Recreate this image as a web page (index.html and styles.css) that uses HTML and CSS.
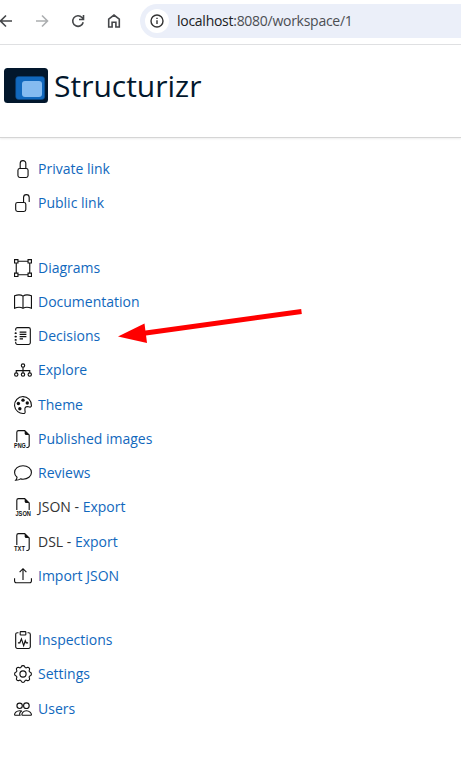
FILE: index.html
```html
<!DOCTYPE html>
<html lang="en">
<head>
<meta charset="utf-8">
<title>Structurizr</title>
<link rel="stylesheet" href="styles.css">
</head>
<body>
<div class="toolbar">
  <svg class="nav" viewBox="0 0 16 16"><path d="M14 8H2.500M8 2.500 2.500 8 8 13.500"/></svg>
  <svg class="nav off" viewBox="0 0 16 16"><path d="M2 8h11.500M8 2.500 13.500 8 8 13.500"/></svg>
  <svg class="nav" viewBox="0 0 16 16"><path d="M13.200 9.200A5.300 5.300 0 1 1 12 4.500L13.300 6M13.500 2v4.500H9"/></svg>
  <svg class="nav" viewBox="0 0 16 16"><path d="M2.700 14V6.200L8 2l5.300 4.200V14H9.900V9.200H6.100V14Z"/></svg>
  <div class="address">
    <span class="info"><svg viewBox="0 0 16 16"><circle cx="8" cy="8" r="6"/><path d="M8 7.300v3.700M8 4.700v1.400"/></svg></span>
    <span class="url"><b>localhost</b>:8080/workspace/1</span>
  </div>
</div>
<header class="brand">
  <svg class="logo" viewBox="0 0 44 35"><rect width="44" height="35" rx="3.500" fill="#02172c"/><rect x="11.700" y="8.500" width="29" height="23" rx="3" fill="#1168bd" stroke="#0b4884" stroke-width=".6"/><rect x="18" y="13" width="20" height="16" rx="3" fill="#85bbf0"/></svg>
  <span class="name">Structurizr</span>
</header>
<main>
  <ul class="menu">
    <li><svg viewBox="0 0 16 16"><path d="M5.500 7V3a2.500 2.500 0 0 1 5 0V7"/><rect x="3.500" y="7.500" width="9" height="8" rx="1.700"/></svg><a>Private link</a></li>
    <li><svg viewBox="0 0 16 16"><path d="M8.500 7.500V3a2.500 2.500 0 0 1 5 0V7"/><rect x="1.500" y="7.500" width="9" height="8" rx="1.700"/></svg><a>Public link</a></li>
  </ul>
  <ul class="menu">
    <li><svg viewBox="0 0 16 16"><path d="M.5.500h3v3h-3zM12.500.500h3v3h-3zM.5 12.500h3v3h-3zM12.500 12.500h3v3h-3zM3.500 2h9M3.500 14h9M2 3.500v9M14 3.500v9"/></svg><a>Diagrams</a></li>
    <li><svg viewBox="0 0 16 16"><path d="M8 2.800C6 1.300 3 1.500.5 2.500v11c2.500-1 5.500-1.200 7.500.2 2-1.400 5-1.200 7.500-.2v-11C13 1.500 10 1.300 8 2.800v10.900"/></svg><a>Documentation</a></li>
    <li><svg viewBox="0 0 16 16"><path d="M1.500 3V2A1.500 1.500 0 0 1 3 .5h10A1.500 1.500 0 0 1 14.500 2v12a1.500 1.500 0 0 1-1.500 1.500H3A1.500 1.500 0 0 1 1.500 14v-1M1.500 4.700v1.600M1.500 7.700v1.600M1.500 10.700v1.600M.5 5.500h2M.5 8.500h2M.5 11.500h2M5 4.500h6M5 6.500h6M5 8.500h6M5 10.500h3"/></svg><a>Decisions</a></li>
    <li><svg viewBox="0 0 16 16"><circle cx="8" cy="4" r="1.500"/><circle cx="2" cy="12" r="1.500"/><circle cx="8" cy="12" r="1.500"/><circle cx="14" cy="12" r="1.500"/><path d="M8 5.500v5M2 10.500v-2h12v2"/></svg><a>Explore</a></li>
    <li><svg viewBox="0 0 16 16"><path d="M8 .5a7.500 7.500 0 1 0 1.200 14.900c1-.2.700-1.600.5-2.600-.2-1.400-.1-2.400.7-3 1.100-.9 2.300-.2 3.500 0 1 .2 1.600-.5 1.600-1.400C15.500 4 12.200.5 8 .5Z"/><g class="solid"><circle cx="8" cy="3.700" r="1.500"/><circle cx="3.900" cy="6.700" r="1.500"/><circle cx="5.200" cy="11.300" r="1.500"/><circle cx="11.800" cy="6.200" r="1.500"/></g></svg><a>Theme</a></li>
    <li><svg viewBox="0 0 16 16"><path d="M2.500 10.700V2A1.500 1.500 0 0 1 4 .5h5.500L13.500 4.500V14a1.500 1.500 0 0 1-1.500 1.500h-1"/><path class="solid" d="M9.500.500v2.500A1.500 1.500 0 0 0 11 4.500h2.500Z"/><text x="0" y="16" textLength="10.500" lengthAdjust="spacingAndGlyphs">PNG</text></svg><a>Published images</a></li>
    <li><svg viewBox="0 0 16 16"><path d="M2.700 11.800C1.300 10.700.5 9.200.5 7.500.5 4.100 3.800 1.500 8 1.500s7.500 2.600 7.500 6-3.300 6-7.500 6c-.8 0-1.500-.1-2.200-.3-1 .7-2.600 1.200-4.300 1.300.8-1 1.200-1.900 1.200-2.700Z"/></svg><a>Reviews</a></li>
    <li><svg viewBox="0 0 16 16"><path d="M2.500 10.700V2A1.500 1.500 0 0 1 4 .5h5.500L13.500 4.500v6.200"/><path class="solid" d="M9.500.500v2.500A1.500 1.500 0 0 0 11 4.500h2.500Z"/><text x="1.300" y="16" textLength="13.800" lengthAdjust="spacingAndGlyphs">JSON</text></svg><span>JSON - <a>Export</a></span></li>
    <li><svg viewBox="0 0 16 16"><path d="M2.500 10.700V2A1.500 1.500 0 0 1 4 .5h5.500L13.500 4.500V14a1.500 1.500 0 0 1-1.500 1.500h-1"/><path class="solid" d="M9.500.500v2.500A1.500 1.500 0 0 0 11 4.500h2.500Z"/><text x="0" y="16" textLength="9.800" lengthAdjust="spacingAndGlyphs">TXT</text></svg><span>DSL - <a>Export</a></span></li>
    <li><svg viewBox="0 0 16 16"><path d="M.5 10v2.500A1.500 1.500 0 0 0 2 14h12a1.500 1.500 0 0 0 1.500-1.500V10M8 11.500V1.500M5 4.500l3-3 3 3"/></svg><a>Import JSON</a></li>
  </ul>
  <ul class="menu">
    <li><svg viewBox="0 0 16 16"><path d="M4 1.500H3A1.500 1.500 0 0 0 1.500 3v11A1.500 1.500 0 0 0 3 15.500h10a1.500 1.500 0 0 0 1.500-1.500V3A1.500 1.500 0 0 0 13 1.500h-1"/><rect x="5.500" y=".5" width="5" height="3" rx=".5"/><path d="M3.500 10.500h1.700L6.600 7l2 6 1.400-4.500.8 2h1.700"/></svg><a>Inspections</a></li>
    <li><svg viewBox="0 0 16 16"><circle cx="8" cy="8" r="2.750"/><path d="M6.500 1.500c.4-1.300 2.600-1.300 3 0 .3 1 1.200 1.300 2.100.8 1.300-.7 2.800.8 2.100 2.100-.5.900-.2 1.800.8 2.100 1.300.4 1.300 2.600 0 3-1 .3-1.300 1.200-.8 2.100.7 1.300-.8 2.800-2.100 2.100-.9-.5-1.800-.2-2.100.8-.4 1.300-2.600 1.300-3 0-.3-1-1.200-1.300-2.100-.8-1.300.7-2.800-.8-2.100-2.100.5-.9.200-1.800-.8-2.100-1.300-.4-1.300-2.600 0-3 1-.3 1.300-1.200.8-2.100-.7-1.300.8-2.800 2.100-2.100.9.500 1.800.2 2.100-.8Z"/></svg><a>Settings</a></li>
    <li><svg viewBox="0 0 16 16"><circle cx="11" cy="5" r="2.500"/><circle cx="5" cy="5.200" r="2.400"/><path d="M7.500 13.500c-.5 0-.5-.5-.5-.5 0-1.400 1.300-3.500 4-3.500s4.500 2.100 4.500 3.500c0 0 0 .5-.5.500ZM7 9.800C6.500 9.600 5.800 9.500 5 9.500c-3 0-4.500 2.300-4.500 3.500 0 .3.200.5.500.5h4.300c-.7-1.500.4-3 1.700-3.700"/></svg><a>Users</a></li>
  </ul>
</main>
<svg class="pointer" viewBox="0 0 190 40"><path d="M34 33.300 191.500 11.500" stroke="red" stroke-width="5"/><path d="M8 36.500 34.500 23.500 37 43Z" fill="red" stroke="none"/></svg>
</body>
</html>
```
FILE: styles.css
```css
* { box-sizing: border-box; }
body {
  margin: 0;
  height: 769px;
  overflow: hidden;
  position: relative;
  background: #fff;
  color: #333;
  font: 14px/20px "Open Sans", sans-serif;
}
svg { display: block; flex: none; overflow: visible; fill: none; stroke: #111; }
.toolbar {
  display: flex;
  align-items: center;
  gap: 20px;
  height: 45px;
  padding: 0 0 3px;
  margin-left: -2px;
  border-bottom: 1px solid #dedfe1;
}
.nav { width: 16px; height: 16px; stroke: #45474a; stroke-width: 1.6; }
.nav.off { stroke: #acaeb0; }
.address {
  flex: 1;
  display: flex;
  align-items: center;
  height: 34px;
  margin-left: -2px;
  padding-left: 5px;
  border-radius: 17px 0 0 17px;
  background: #ebeff9;
}
.info {
  display: flex;
  align-items: center;
  justify-content: center;
  width: 24px;
  height: 24px;
  border-radius: 50%;
  background: #fff;
}
.info svg { width: 16px; height: 16px; stroke: #333; stroke-width: 1.4; }
.url { margin-left: 8px; color: #4b4e53; letter-spacing: -.27px; }
.url b { font-weight: 400; color: #202124; }
.brand {
  display: flex;
  height: 93px;
  padding: 23px 0 0 4px;
  border-bottom: 1px solid #d5d5d5;
  box-shadow: 0 1px 2px #eee;
}
.logo { width: 44px; height: 35px; stroke: none; }
.name { margin-left: 6px; font-size: 30px; line-height: 35px; color: #02172c; }
main { padding-top: 14px; }
.menu { list-style: none; margin: 0 0 30px; padding: 0 0 0 14px; }
.menu li { display: flex; align-items: center; gap: 6px; height: 34.250px; }
.menu svg { width: 18px; height: 18px; }
.menu .solid { fill: #111; stroke: none; }
.menu text { fill: #111; stroke: none; font: 700 6px "Liberation Sans", sans-serif; }
.menu a { color: #1168bd; }
.pointer { position: absolute; left: 110px; top: 300px; width: 190px; height: 40px; }
```
